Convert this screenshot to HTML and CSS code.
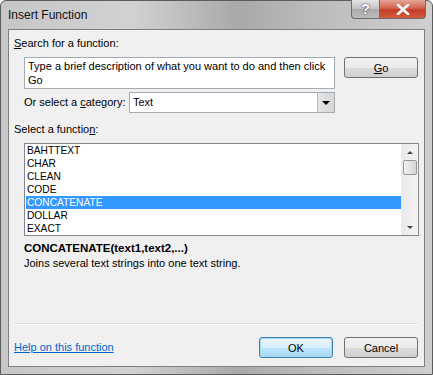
FILE: index.html
```html
<!DOCTYPE html>
<html lang="en">
<head>
    <meta charset="UTF-8">
    <title>Insert Function</title>
    <link rel="stylesheet" href="styles.css">
</head>
<body>
    <div class="window">
        <div class="titlebar">
            <span class="title">Insert Function</span>
            <div class="caption-buttons">
                <div class="cap-btn help-btn">?</div>
                <div class="cap-btn close-btn">
                    <svg width="14" height="11" viewBox="0 0 14 11">
                        <path d="M2 1 L12 10 M12 1 L2 10" stroke="#ffffff" stroke-width="2.6" stroke-linecap="round"/>
                    </svg>
                </div>
            </div>
        </div>
        <div class="client">
            <div class="label first"><u>S</u>earch for a function:</div>
            <div class="search-row">
                <div class="search-box">Type a brief description of what you want to do and then click Go</div>
                <button class="btn go-btn"><u>G</u>o</button>
            </div>
            <div class="category-row">
                <span class="cat-label">Or select a <u>c</u>ategory:</span>
                <div class="select">
                    <span class="select-text">Text</span>
                    <div class="select-arrow"><span class="tri-down"></span></div>
                </div>
            </div>
            <div class="label fn-label">Select a functio<u>n</u>:</div>
            <div class="listbox">
                <ul class="items">
                    <li>BAHTTEXT</li>
                    <li>CHAR</li>
                    <li>CLEAN</li>
                    <li>CODE</li>
                    <li class="selected">CONCATENATE</li>
                    <li>DOLLAR</li>
                    <li>EXACT</li>
                </ul>
                <div class="scrollbar">
                    <span class="sb-up"></span>
                    <div class="sb-thumb"></div>
                    <span class="sb-down"></span>
                </div>
            </div>
            <div class="signature">CONCATENATE(text1,text2,...)</div>
            <div class="description">Joins several text strings into one text string.</div>
            <div class="separator"></div>
            <div class="footer">
                <a class="help-link" href="#">Help on this function</a>
                <div class="footer-buttons">
                    <button class="btn ok-btn">OK</button>
                    <button class="btn">Cancel</button>
                </div>
            </div>
        </div>
    </div>
</body>
</html>
```

FILE: styles.css
```css
body {
    margin: 0;
    font-family: "Liberation Sans", Arial, sans-serif;
    font-size: 11px;
    line-height: 15px;
    color: #000;
}
.window {
    width: 433px;
    height: 375px;
    box-sizing: border-box;
    padding: 0 7px 7px 7px;
    background: linear-gradient(90deg, #c6c6c6 0%, #d2d2d2 30%, #a9a9a9 55%, #bdbdbd 75%, #cfcfcf 100%);
    border: 1px solid #5c5c5c;
    border-radius: 6px 6px 0 0;
    display: flex;
    flex-direction: column;
}
.titlebar {
    height: 28px;
    display: flex;
    align-items: flex-start;
    justify-content: space-between;
}
.title {
    margin-top: 7px;
    font-size: 12px;
    color: #111;
}
.caption-buttons {
    display: flex;
    margin-right: -1px;
    margin-top: -1px;
}
.cap-btn {
    height: 19px;
    display: flex;
    align-items: center;
    justify-content: center;
    border: 1px solid #6d6d6d;
    border-top: none;
    box-sizing: border-box;
}
.help-btn {
    width: 28px;
    border-right: none;
    border-radius: 0 0 0 4px;
    background: linear-gradient(#e4e4e4, #c2c2c2 50%, #acacac 51%, #bcbcbc);
    color: #fff;
    font-weight: bold;
    font-size: 14px;
    text-shadow: 0 0 2px #555, 0 0 1px #333;
}
.close-btn {
    width: 47px;
    border-radius: 0 0 4px 0;
    background: linear-gradient(#e8a496, #d0644f 45%, #c43c22 55%, #d45a3e);
}
.client {
    flex: 1;
    background: #f0f0f0;
    border: 1px solid #7f7f7f;
    padding: 0 6px 0 5px;
    display: flex;
    flex-direction: column;
}
.label {
    height: 15px;
    white-space: nowrap;
}
.first {
    margin-top: 6px;
}
.search-row {
    display: flex;
    align-items: flex-start;
    margin-top: 6px;
    padding-left: 10px;
}
.search-box {
    width: 312px;
    height: 32px;
    box-sizing: border-box;
    background: #fff;
    border: 1px solid #a5acb5;
    padding: 1px 3px;
    line-height: 14px;
}
.btn {
    width: 74px;
    height: 21px;
    box-sizing: border-box;
    border: 1px solid #707070;
    border-radius: 3px;
    background: linear-gradient(#f2f2f2, #ebebeb 50%, #dddddd 51%, #cfcfcf);
    font-family: "Liberation Sans", Arial, sans-serif;
    font-size: 11px;
    padding: 0;
    color: #000;
}
.go-btn {
    margin-left: 9px;
}
.category-row {
    display: flex;
    align-items: center;
    margin-top: 3px;
    padding-left: 10px;
}
.cat-label {
    width: 105px;
    white-space: nowrap;
}
.select {
    width: 206px;
    height: 21px;
    box-sizing: border-box;
    border: 1px solid #a5acb5;
    background: #fff;
    display: flex;
    align-items: center;
    justify-content: space-between;
}
.select-text {
    padding-left: 3px;
}
.select-arrow {
    width: 17px;
    height: 19px;
    box-sizing: border-box;
    border-left: 1px solid #b8b8b8;
    background: linear-gradient(90deg, #e6e6e6, #d6d6d6);
    display: flex;
    align-items: center;
    justify-content: center;
}
.tri-down {
    width: 0;
    height: 0;
    border-left: 4px solid transparent;
    border-right: 4px solid transparent;
    border-top: 4px solid #000;
}
.fn-label {
    margin-top: 9px;
}
.listbox {
    margin: 6px 0 0 10px;
    width: 395px;
    height: 93px;
    box-sizing: border-box;
    border: 1px solid #828790;
    background: #fff;
    display: flex;
}
.items {
    list-style: none;
    margin: 0;
    padding: 0 0 0 1px;
    flex: 1;
    font-size: 10.2px;
}
.items li {
    height: 13px;
    line-height: 13px;
    padding-left: 1px;
}
.items li.selected {
    background: #3399ff;
    color: #fff;
}
.scrollbar {
    width: 17px;
    background: linear-gradient(90deg, #e9e9e9, #f4f4f4);
    display: flex;
    flex-direction: column;
    align-items: center;
}
.sb-up {
    margin-top: 7px;
    width: 0;
    height: 0;
    border-left: 3px solid transparent;
    border-right: 3px solid transparent;
    border-bottom: 3px solid #444;
}
.sb-thumb {
    margin-top: 6px;
    width: 14px;
    height: 15px;
    box-sizing: border-box;
    border: 1px solid #979797;
    border-radius: 2px;
    background: linear-gradient(90deg, #f3f3f3, #e2e2e2 50%, #d6d6d6);
}
.sb-down {
    margin-top: auto;
    margin-bottom: 6px;
    width: 0;
    height: 0;
    border-left: 3px solid transparent;
    border-right: 3px solid transparent;
    border-top: 3px solid #444;
}
.signature {
    margin: 5px 0 0 10px;
    font-weight: bold;
    font-size: 11.5px;
}
.description {
    margin-left: 10px;
    line-height: 14px;
}
.separator {
    margin-top: 53px;
    height: 1px;
    background: #dcdcdc;
    border-bottom: 1px solid #ffffff;
}
.footer {
    display: flex;
    align-items: center;
    justify-content: space-between;
    margin-top: 12px;
}
.help-link {
    color: #0066cc;
    text-decoration: underline;
}
.footer-buttons {
    display: flex;
    gap: 11px;
}
.ok-btn {
    border-color: #3c7fb1;
    box-shadow: inset 0 0 0 1px #a7d9f5;
    background: linear-gradient(#eaf6fd, #d9f0fc 50%, #bee6fd 51%, #a7d9f5);
}
```
